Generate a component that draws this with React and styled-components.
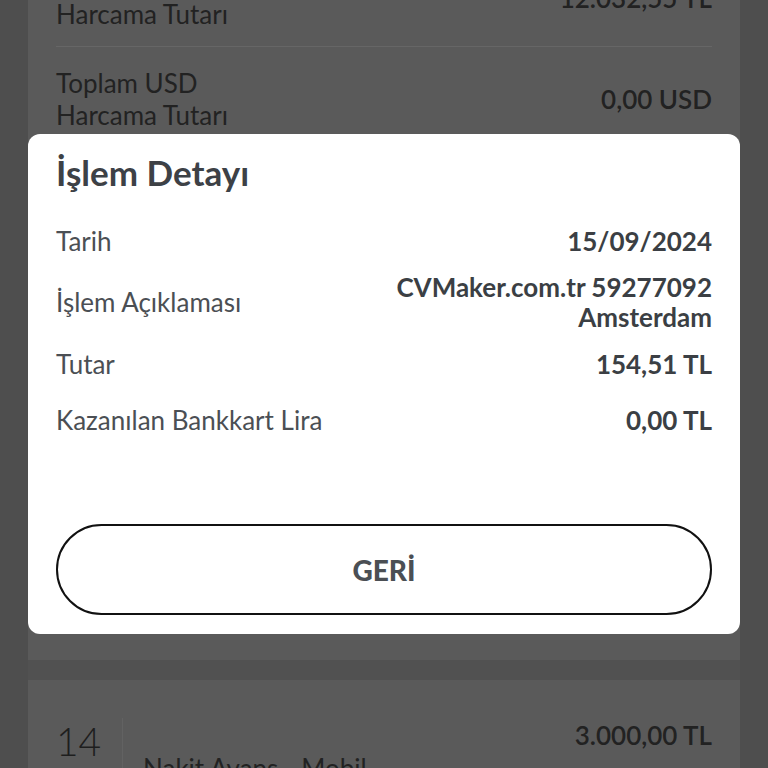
import React from "react";
import styled, { createGlobalStyle } from "styled-components";

const GlobalStyle = createGlobalStyle`
  html, body {
    margin: 0;
    padding: 0;
    background: #4e4e4e;
    font-family: Lato, "Open Sans", sans-serif;
  }
`;

const rows = [
  { label: "Tarih", value: ["15/09/2024"] },
  { label: "İşlem Açıklaması", value: ["CVMaker.com.tr 59277092", "Amsterdam"] },
  { label: "Tutar", value: ["154,51 TL"] },
  { label: "Kazanılan Bankkart Lira", value: ["0,00 TL"] },
];

export default function App() {
  return (
    <>
      <GlobalStyle />
      <Page>
        <Summary>
          <SumRow>
            <SumLabel>
              Toplam TL
              <br />
              Harcama Tutarı
            </SumLabel>
            <SumValue>12.032,55 TL</SumValue>
          </SumRow>
          <Divider />
          <SumRow>
            <SumLabel>
              Toplam USD
              <br />
              Harcama Tutarı
            </SumLabel>
            <SumValue>0,00 USD</SumValue>
          </SumRow>
        </Summary>
        <Band />
        <TxCard>
          <Day>14</Day>
          <TxBody>
            <TxAmount>3.000,00 TL</TxAmount>
            <TxName>Nakit Avans - Mobil</TxName>
          </TxBody>
        </TxCard>

        <Modal>
          <Title>İşlem Detayı</Title>
          <Rows>
            {rows.map((r) => (
              <Row key={r.label}>
                <Label>{r.label}</Label>
                <Value>
                  {r.value.map((v) => (
                    <span key={v}>{v}</span>
                  ))}
                </Value>
              </Row>
            ))}
          </Rows>
          <BackButton>GERİ</BackButton>
        </Modal>
      </Page>
    </>
  );
}

const Page = styled.div`
  position: relative;
  height: 768px;
  overflow: hidden;
  padding: 0 28px;
  box-sizing: border-box;
  background: #4e4e4e;
  display: flex;
  flex-direction: column;
`;

const Summary = styled.div`
  background: #5a5a5a;
  margin-top: -40px;
  height: 700px;
  padding: 0 28px;
  flex-shrink: 0;
`;

const SumRow = styled.div`
  display: flex;
  justify-content: space-between;
  align-items: center;
  padding: 6px 0;
`;

const SumLabel = styled.div`
  font-size: 26px;
  line-height: 32px;
  color: #222;
`;

const SumValue = styled.div`
  font-size: 26px;
  font-weight: 600;
  color: #222;
`;

const Divider = styled.div`
  height: 1px;
  background: #666;
  margin: 10px 0 14px;
`;

const Band = styled.div`
  height: 20px;
  background: #515151;
  flex-shrink: 0;
`;

const TxCard = styled.div`
  background: #5a5a5a;
  display: flex;
  flex: 1;
  padding: 38px 28px 0;
`;

const Day = styled.div`
  width: 66px;
  font-size: 39px;
  font-weight: 300;
  color: #1e1e1e;
  border-right: 1px solid #626262;
  line-height: 46px;
`;

const TxBody = styled.div`
  flex: 1;
  display: flex;
  flex-direction: column;
  padding-left: 20px;
`;

const TxAmount = styled.div`
  align-self: flex-end;
  font-size: 26px;
  font-weight: 600;
  color: #222;
  line-height: 34px;
`;

const TxName = styled.div`
  font-size: 26px;
  color: #222;
  margin-top: 0;
`;

const Modal = styled.div`
  position: absolute;
  top: 134px;
  left: 28px;
  width: 712px;
  height: 500px;
  box-sizing: border-box;
  background: #fff;
  border-radius: 12px;
  padding: 16px 28px 19px;
  display: flex;
  flex-direction: column;
`;

const Title = styled.h2`
  margin: 0;
  font-size: 35px;
  line-height: 44px;
  font-weight: 700;
  color: #3d4146;
`;

const Rows = styled.div`
  display: flex;
  flex-direction: column;
  gap: 7px;
  margin-top: 22px;
`;

const Row = styled.div`
  display: flex;
  justify-content: space-between;
  align-items: center;
  min-height: 49px;
`;

const Label = styled.div`
  font-size: 26px;
  color: #4b4f54;
`;

const Value = styled.div`
  display: flex;
  flex-direction: column;
  align-items: flex-end;
  font-size: 26px;
  line-height: 30px;
  font-weight: 700;
  color: #3b3f44;
`;

const BackButton = styled.button`
  margin-top: auto;
  height: 91px;
  width: 100%;
  border: 2px solid #111;
  border-radius: 46px;
  background: #fff;
  font-family: Lato, sans-serif;
  font-size: 28px;
  font-weight: 900;
  color: #4b4f54;
`;
